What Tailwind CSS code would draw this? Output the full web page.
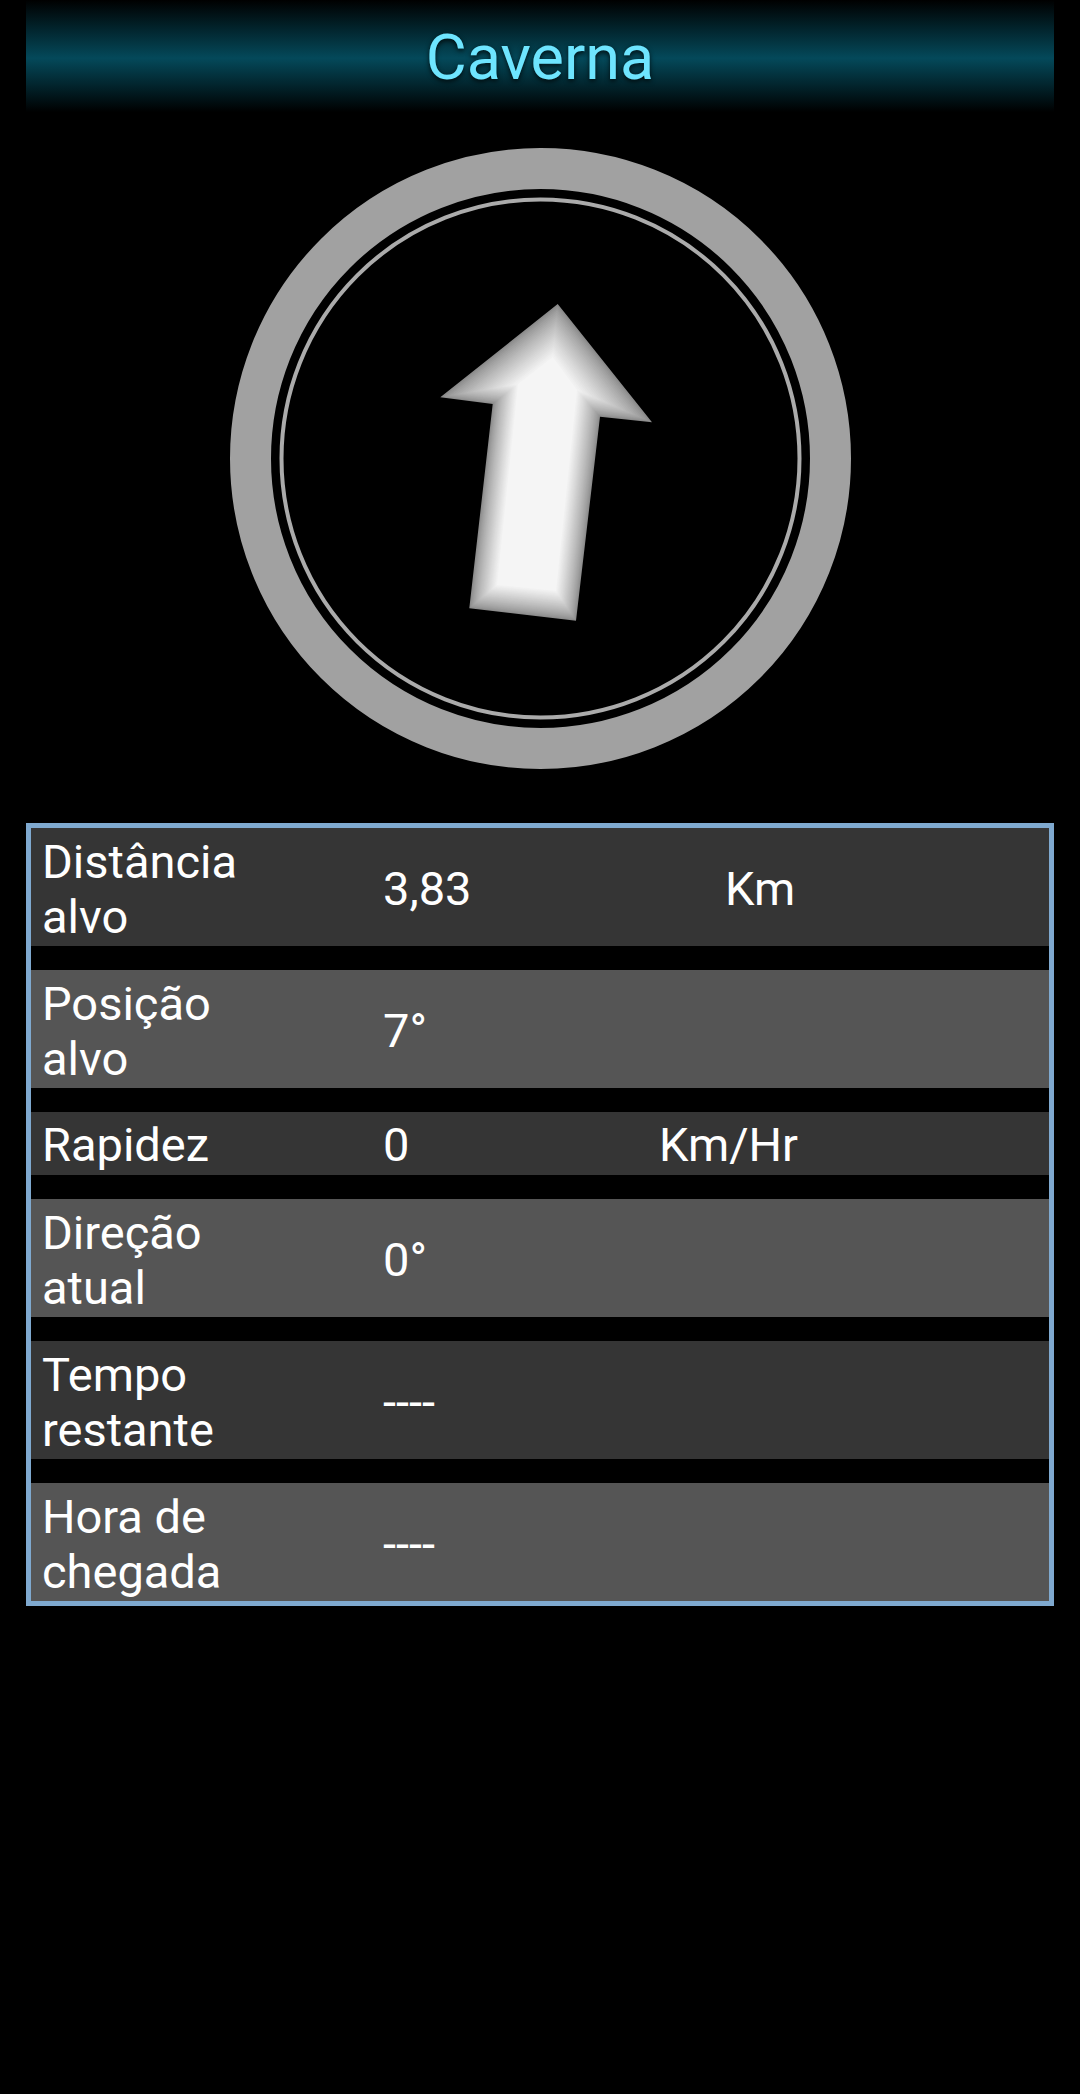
<!DOCTYPE html>
<html lang="en">
<head>
    <meta charset="UTF-8">
    <meta name="viewport" content="width=device-width, initial-scale=1.0">
    <title>Caverna</title>
    <script src="https://cdn.jsdelivr.net/npm/@tailwindcss/browser@4"></script>
</head>
<body class="bg-black min-h-[2094px] font-['Roboto',sans-serif]">
    <!-- Title bar -->
    <header class="mx-[26px] h-[112px] pt-[3px] flex items-center justify-center bg-[linear-gradient(to_bottom,#000000_0%,#04495a_52%,#000000_100%)]">
        <h1 class="text-[63px] leading-none text-[#6ee5ff] [text-shadow:0_2px_5px_rgba(0,0,0,0.8)]">Caverna</h1>
    </header>

    <!-- Compass -->
    <div class="mt-[36px] flex justify-center">
        <svg id="compass" class="w-[621px] h-[621px]" viewBox="229 148 621 621" xmlns="http://www.w3.org/2000/svg">
            <circle cx="539.5" cy="458.5" r="290" fill="none" stroke="#a1a1a1" stroke-width="41"/>
            <circle cx="539.5" cy="458.5" r="259" fill="none" stroke="#ababab" stroke-width="4"/>
            <g id="arrow"></g>
        </svg>
    </div>

    <!-- Info table -->
    <div class="mt-[54px] mx-[26px] border-[5px] border-[#7fa9cf] flex flex-col gap-[24px] text-white text-[47px] leading-[55px]">
        <div class="grid grid-cols-[352px_276px_1fr] items-center pt-[6px] pb-[2px] bg-[#353535]">
            <div class="pl-[11px] w-[260px]">Distância alvo</div>
            <div class="pb-[2px]">3,83</div>
            <div class="pl-[66px] pb-[2px]">Km</div>
        </div>
        <div class="grid grid-cols-[352px_276px_1fr] items-center pt-[6px] pb-[2px] bg-[#555555]">
            <div class="pl-[11px] w-[260px]">Posição alvo</div>
            <div class="pb-[2px]">7°</div>
            <div></div>
        </div>
        <div class="grid grid-cols-[352px_276px_1fr] items-center pt-[5px] pb-[3px] bg-[#353535]">
            <div class="pl-[11px] w-[260px]">Rapidez</div>
            <div>0</div>
            <div>Km/Hr</div>
        </div>
        <div class="grid grid-cols-[352px_276px_1fr] items-center pt-[6px] pb-[2px] bg-[#555555]">
            <div class="pl-[11px] w-[260px]">Direção atual</div>
            <div class="pb-[2px]">0°</div>
            <div></div>
        </div>
        <div class="grid grid-cols-[352px_276px_1fr] items-center pt-[6px] pb-[2px] bg-[#353535]">
            <div class="pl-[11px] w-[260px]">Tempo restante</div>
            <div class="pb-[2px]">----</div>
            <div></div>
        </div>
        <div class="grid grid-cols-[352px_276px_1fr] items-center pt-[6px] pb-[2px] bg-[#555555]">
            <div class="pl-[11px] w-[220px]">Hora de chegada</div>
            <div class="pb-[2px]">----</div>
            <div></div>
        </div>
    </div>

    <script>
        // bevelled arrow: stack of polygons going from the outline to the flat top
        const outer = [[556.7,304],[651,422.3],[599,416.7],[575,620.7],[468.3,608.3],[491.7,404],[439.3,397.3]];
        const inner = [[551.7,357],[576,390],[576,390],[555,591],[496,585],[517,384],[517,384]];
        const group = document.getElementById("arrow");
        const steps = 24;
        for (let i = 0; i <= steps; i++) {
            const t = i / steps;
            const pts = outer.map((p, n) => (p[0] + (inner[n][0] - p[0]) * t).toFixed(1) + "," + (p[1] + (inner[n][1] - p[1]) * t).toFixed(1));
            const g = Math.round(140 + 105 * Math.pow(t, 0.8));
            const poly = document.createElementNS("http://www.w3.org/2000/svg", "polygon");
            poly.setAttribute("points", pts.join(" "));
            poly.setAttribute("fill", `rgb(${g},${g},${g})`);
            group.appendChild(poly);
        }
    </script>
</body>
</html>
